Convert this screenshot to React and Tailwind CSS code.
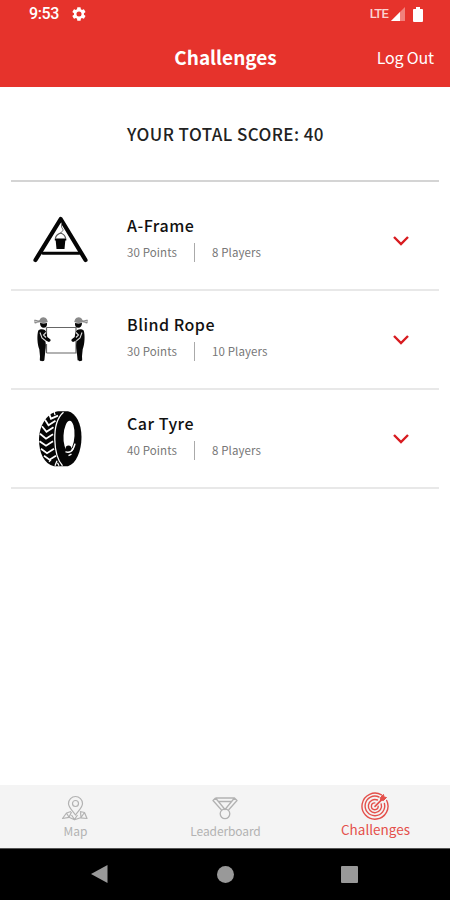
import React from 'react';

const AFrameIcon = () => (
  <svg width="60" height="60" viewBox="0 0 60 60" fill="none" stroke="#050505" strokeLinecap="round">
    <path d="M4.500 49 29.700 8 54.500 49" strokeWidth="4.200" strokeLinejoin="round" />
    <path d="M12 42.300h36" strokeWidth="3" />
    <path d="M30.500 12v4l1.800 3-3 3.500" strokeWidth="1" stroke="#777" />
    <path d="M24.500 27c.5-3 2.500-4 5-5 3 1 4.500 2 5 5" strokeWidth="1.200" stroke="#555" />
    <path d="M23.800 27.500h11.500v2h-1l-.8 8.500h-8l-.8-8.500h-.9z" fill="#050505" stroke="none" />
  </svg>
);

const Carrier = () => (
  <g>
    <path d="M3.500 7.500c1.500-1 3 1 5.500.3 1-3.600 5.500-4.100 7.500-.8l.8 2.500c-3 1.500-6.300 1.300-8.300.3-2 0-3 1.500-5 1z" fill="#8a8a8a" />
    <path d="M3.500 8.500 7 9.500" stroke="#ccc" strokeWidth="1" />
    <path d="M9.500 10.300c2 .8 4.500.8 7 .3.300 3-.8 4.700-3.300 4.700-2.200 0-3.700-1.700-3.700-5z" fill="#080808" />
    <path
      d="M7.800 18c1.500-1.500 4.500-1.800 6.500-.5 2 1.500 2 4.500 2.500 7l3 2.300c1 1.500-.5 3-2 2.500l-3.300-1.800c1.200 3.500 1 7 .3 11l-.9 9c-.3 1.500-3.800 1.500-4.600.3l.2-4-.7-7c-2-5-2.500-14-1-18.800z"
      fill="#080808"
    />
    <path d="m9.500 20 2 5.500 3.500 2.700M15.500 20l-2.500 2.500 2.500 2.500" fill="none" stroke="#ddd" strokeWidth="1.100" />
  </g>
);

const BlindRopeIcon = () => (
  <svg width="60" height="60" viewBox="0 0 60 60">
    <path d="M15.500 17.500H45v25.500H15.500M15.500 43v-9M15.500 17.500v8" fill="none" stroke="#666" strokeWidth="1.200" />
    <g transform="translate(-.5 2.500)">
      <Carrier />
    </g>
    <g transform="matrix(-1 0 0 1 60.500 2.500)">
      <Carrier />
    </g>
  </svg>
);

const TyreIcon = () => (
  <svg width="60" height="60" viewBox="0 0 60 60">
    <g transform="translate(0 .7)">
      <path d="M27 1.500h10c8 2 13.500 12 13.500 26S45 54 37 56.500H23C13 54 8 43 8 30S15 3.500 27 1.500z" fill="#060606" />
      <path d="M32.500 2.500C26 8 23.500 18 23.800 30c.3 12 3.200 21 7.700 26" fill="none" stroke="#fff" strokeWidth="1.300" />
      <g fill="none" stroke="#fff" strokeWidth="1.800">
        <path d="m18 4 2 5 7-3M14 10l3.500 5.500 7-4.500M11 16.500l4.500 5.500 7-4.500M9 24l6 5 7-4.500M8.500 31.500l6.500 4.500 7-4.500M10 39l6 4.500 7-4.500M13 46l5.500 4 6.500-4" />
        <path d="m23 1.500 1 4M18 52l2-2M24 56l2-5M28 56l-1.500-3" strokeWidth="1.300" />
      </g>
      <ellipse cx="38" cy="26" rx="5.500" ry="15" fill="#fff" transform="rotate(3 38 26)" />
      <path d="M34.500 42c4 2 8-1 9.500-8" fill="none" stroke="#fff" strokeWidth="1.500" />
      <circle cx="37.500" cy="38.500" r="2.800" fill="#060606" />
      <path d="m37.500 46 3-1.500M40.500 41.500l2-3" stroke="#fff" strokeWidth="1.300" />
    </g>
  </svg>
);

const MapIcon = () => (
  <svg width="28" height="28" viewBox="0 0 28 28" fill="none" stroke="currentColor" strokeWidth="1.200" strokeLinejoin="round">
    <path d="M14.500 20C11.500 15.500 7.500 12.500 7.500 8.500a7 7 0 0 1 14 0c0 4-4 7-7 11.500z" />
    <circle cx="14.500" cy="8.500" r="3" />
    <path d="M10 16.500 5.500 18 1.500 23.500l6.500-1.200 5.500 2.500 6-2 6.500.7L23.500 17.500l-4.500-1M5.500 18l2.500 4.300L10.500 17M10.500 20l3 4.500 3-4.500M19.500 17l.5 5.500 3.500-5" />
  </svg>
);

const MedalIcon = () => (
  <svg width="28" height="28" viewBox="0 0 28 28" fill="none" stroke="currentColor" strokeWidth="1.300" strokeLinejoin="round">
    <path d="M4.500 3h19l2.500 2.500L17.500 15M4.500 3 2 5.500l8.500 9.500M4.500 3l9.500 11.500L23.500 3M7.500 6.500h13" />
    <circle cx="14" cy="18.800" r="4.800" />
  </svg>
);

const TargetIcon = () => (
  <svg width="28" height="28" viewBox="0 0 28 28" fill="none" stroke="currentColor" strokeWidth="1.400" strokeLinecap="round">
    <path d="M20.500 2.900A13 13 0 1 0 25.700 8.500" />
    <path d="M18 5A9.800 9.800 0 1 0 23.400 11.500" />
    <path d="M16.500 8A6.600 6.600 0 1 0 20.200 12" />
    <path d="M13.800 10.900a3.400 3.400 0 1 0 3.400 3.400" />
    <path d="m14 14.300 7.500-7.500" strokeWidth="1.700" />
    <path d="m19.500 5.500 3-3 .5 2.500 2.500.5-3 3-2.500-.5z" fill="currentColor" strokeWidth="1" />
  </svg>
);

const challenges = [
  { name: 'A-Frame', points: 30, players: 8, icon: <AFrameIcon /> },
  { name: 'Blind Rope', points: 30, players: 10, icon: <BlindRopeIcon /> },
  { name: 'Car Tyre', points: 40, players: 8, icon: <TyreIcon /> },
];

const Header = () => (
  <header className="h-[87px] bg-[#e6332c] text-white">
    <div className="flex h-7 items-center pl-[29px] pr-[27px] font-['Roboto',sans-serif]">
      <span className="w-[31px] text-[16px] leading-5 font-medium tracking-[-0.4px]">9:53</span>
      <svg className="ml-[11px]" width="16" height="16" viewBox="0 0 24 24" fill="currentColor">
        <path d="M19.400 13a7.500 7.500 0 0 0 0-2l2.100-1.700a.5.5 0 0 0 .1-.6l-2-3.500a.5.5 0 0 0-.6-.2l-2.500 1a7.300 7.300 0 0 0-1.700-1l-.4-2.600a.5.5 0 0 0-.5-.4h-4a.5.5 0 0 0-.5.4L9 5a7.700 7.700 0 0 0-1.700 1l-2.500-1a.5.5 0 0 0-.6.2l-2 3.500a.5.5 0 0 0 .1.600L4.500 11a7.900 7.900 0 0 0 0 2l-2.200 1.700a.5.5 0 0 0-.1.600l2 3.500c.1.200.4.300.6.200l2.500-1a7.300 7.300 0 0 0 1.700 1l.4 2.600c0 .2.200.4.500.4h4c.3 0 .5-.2.500-.4l.4-2.600a7.700 7.700 0 0 0 1.700-1l2.500 1c.2.100.5 0 .6-.2l2-3.500a.5.5 0 0 0-.1-.6zM12 15.800a3.800 3.800 0 1 1 0-7.600 3.800 3.800 0 0 1 0 7.600z" />
      </svg>
      <span className="ml-auto text-[13px] leading-5 font-medium tracking-[-0.8px] text-[#fbd3d1]">LTE</span>
      <svg className="ml-[3px]" width="14" height="14" viewBox="0 0 14 14">
        <path d="M14 0v14H0z" fill="#f1817c" />
        <path d="M9 5v9H0z" fill="#fff" />
      </svg>
      <svg className="ml-2" width="10" height="15" viewBox="0 0 10 16" preserveAspectRatio="none" fill="currentColor">
        <path d="M3 0h4v2h2a1 1 0 0 1 1 1v12a1 1 0 0 1-1 1H1a1 1 0 0 1-1-1V3a1 1 0 0 1 1-1h2z" />
      </svg>
    </div>
    <div className="grid h-[57px] grid-cols-3 items-center">
      <h1 className="col-start-2 pl-px text-center text-[19px] leading-7 font-bold">Challenges</h1>
      <button className="pr-4 text-right text-[16px] leading-7 tracking-[-0.15px]">Log Out</button>
    </div>
  </header>
);

const ChallengeRow = ({ challenge }) => (
  <li className="flex h-[99px] items-center border-b-2 border-[#e8e8e8]">
    <div className="ml-5 w-[60px]">{challenge.icon}</div>
    <div className="mb-[6px] ml-9 flex-1">
      <h2 className="text-[16px] leading-6 font-medium tracking-[0.5px] text-[#111]">{challenge.name}</h2>
      <div className="mt-[5px] flex h-5 items-center text-[11.5px] leading-5 tracking-[0.1px] text-[#777]">
        <span className="w-[67px]">{challenge.points} Points</span>
        <span className="h-[19px] w-px bg-[#aaa]" />
        <span className="ml-[17px]">{challenge.players} Players</span>
      </div>
    </div>
    <svg className="mr-[29px]" width="18" height="12" viewBox="0 0 18 12" fill="none" stroke="#d81b20" strokeWidth="2.400">
      <path d="m2 2 7 7 7-7" />
    </svg>
  </li>
);

const TabBar = () => (
  <nav className="grid h-[63px] grid-cols-3 bg-[#f4f4f4] text-[#b2b2b2]">
    <div className="flex flex-col items-center pt-[10px]">
      <MapIcon />
      <span className="pl-px text-[12px] leading-4">Map</span>
    </div>
    <div className="flex flex-col items-center pt-[10px]">
      <MedalIcon />
      <span className="pl-px text-[12px] leading-4 tracking-[-0.1px]">Leaderboard</span>
    </div>
    <div className="flex flex-col items-center pt-[7px] text-[#e4504b]">
      <TargetIcon />
      <span className="mt-px pl-px text-[13.5px] leading-4">Challenges</span>
    </div>
  </nav>
);

const SystemNav = () => (
  <div className="grid h-[52px] grid-cols-3 items-center justify-items-center border-t border-[#555] bg-black pb-px text-[#999]">
    <svg className="mr-[42px] justify-self-end" width="17" height="18" viewBox="0 0 17 18" fill="currentColor">
      <path d="M16.500 0v18L0 9z" />
    </svg>
    <div className="size-[17px] rounded-full bg-[#999]" />
    <div className="ml-[41px] size-[17px] justify-self-start rounded-[1px] bg-[#999]" />
  </div>
);

const App = () => (
  <div className="flex h-[900px] w-[450px] flex-col overflow-hidden bg-white font-['Noto_Sans_CJK_SC',sans-serif]">
    <Header />
    <main className="flex-1 px-[11px]">
      <div className="flex h-[95px] items-center justify-center border-b-2 border-[#d4d4d4] pl-px text-[17px] leading-6 font-medium tracking-[0.43px] text-[#222]">
        YOUR TOTAL SCORE: 40
      </div>
      <ul className="pt-[10px]">
        {challenges.map((challenge) => (
          <ChallengeRow key={challenge.name} challenge={challenge} />
        ))}
      </ul>
    </main>
    <TabBar />
    <SystemNav />
  </div>
);

export default App;
